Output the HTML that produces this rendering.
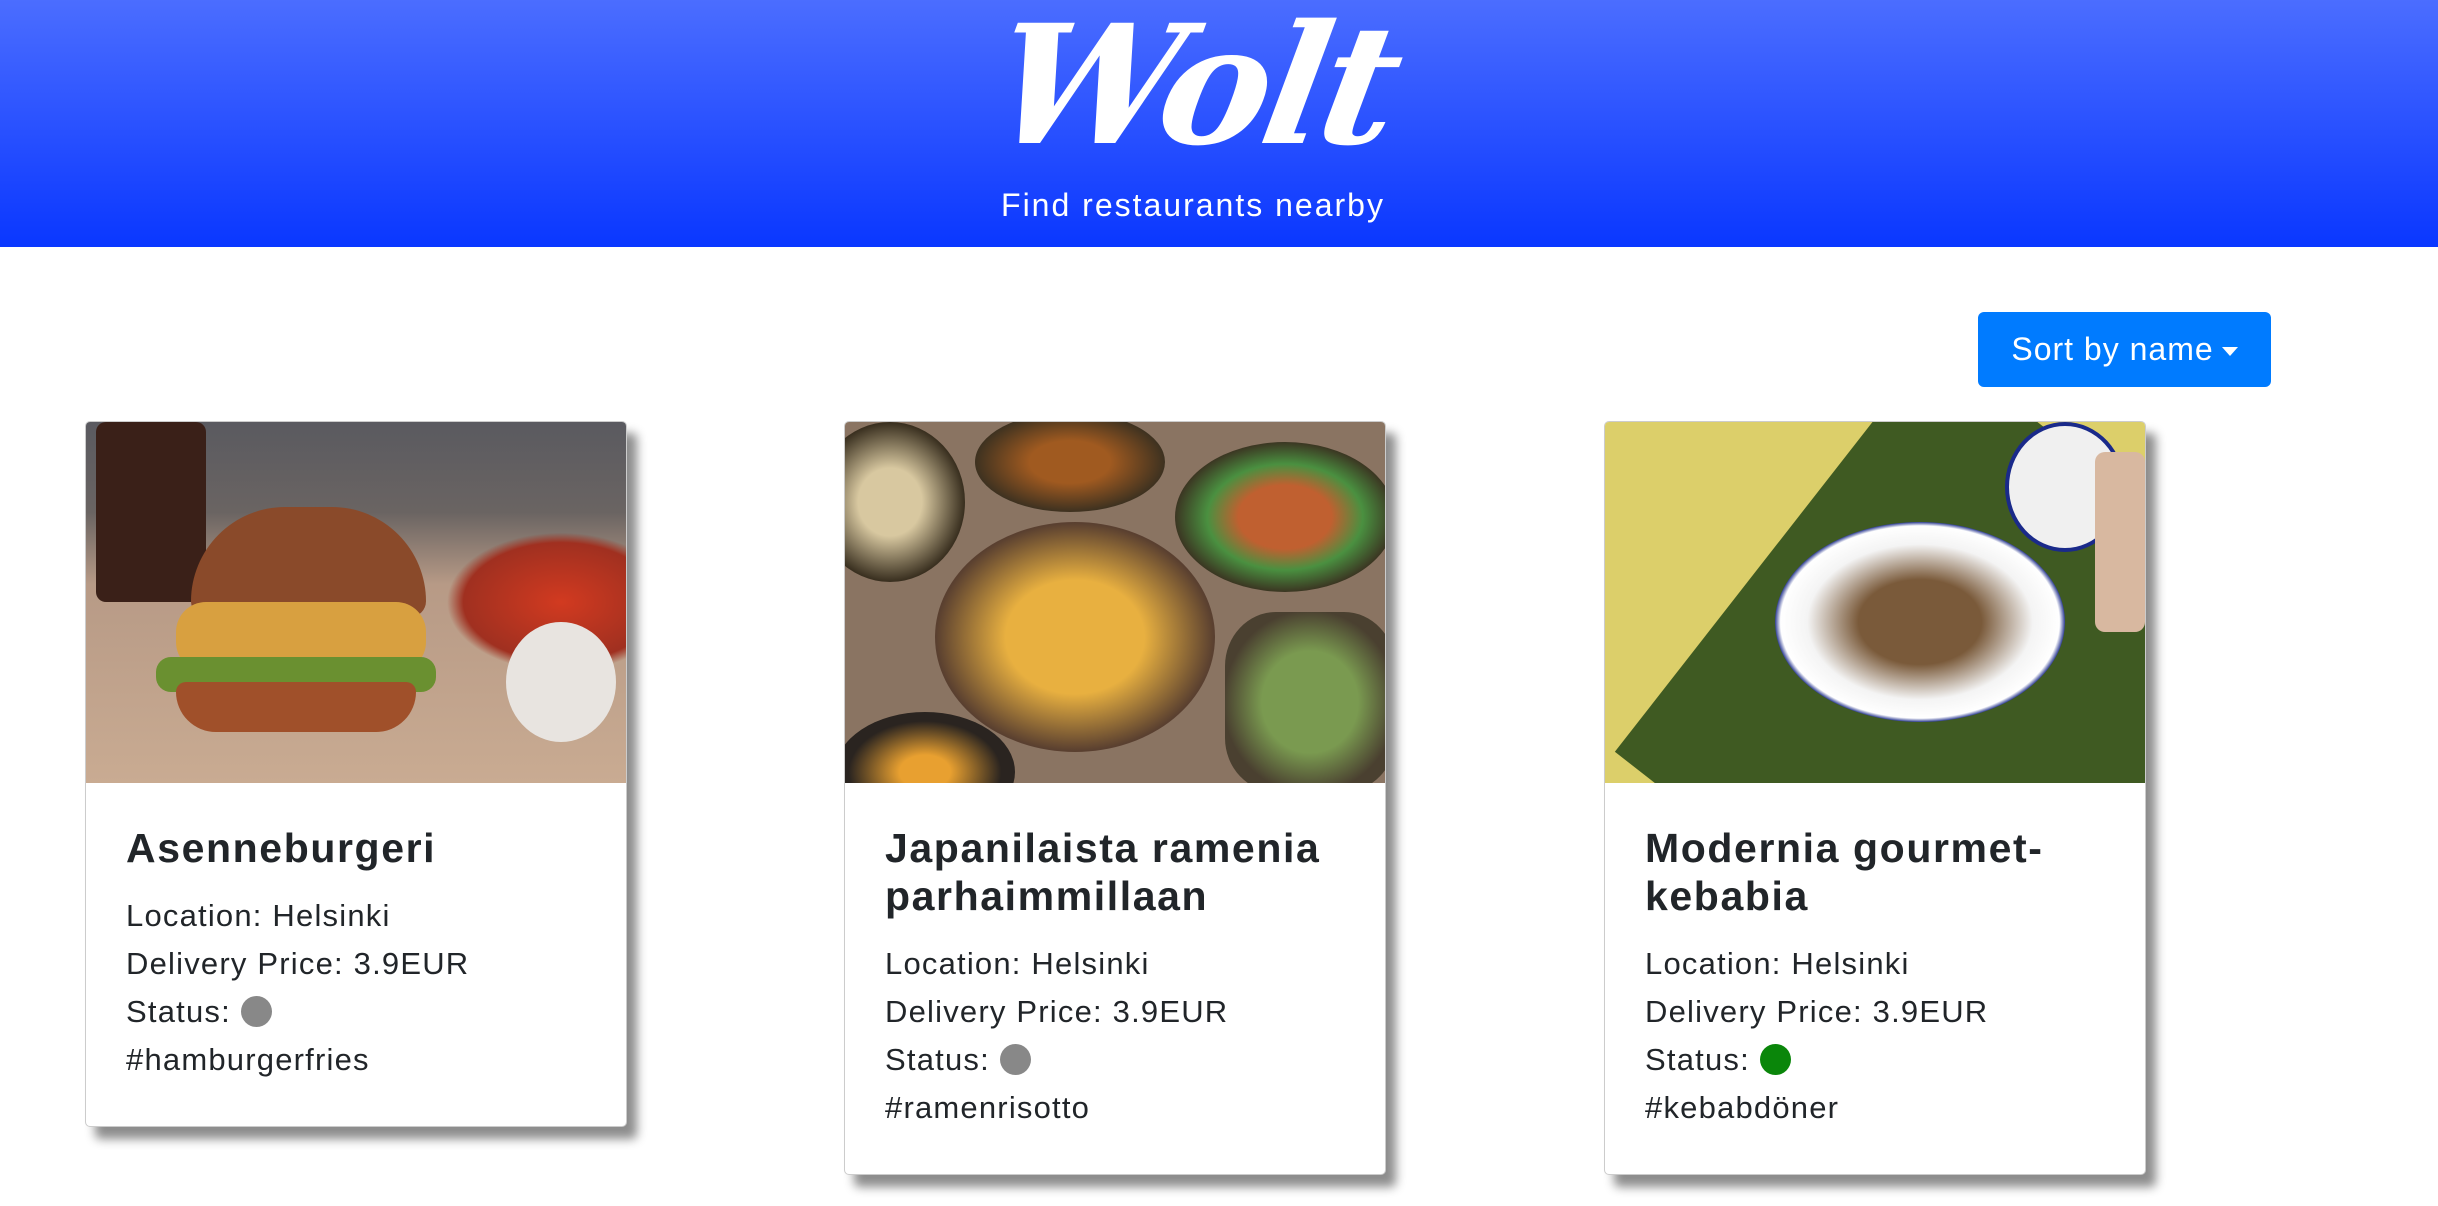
<!DOCTYPE html>
<html><head><meta charset="utf-8"><style>
*{margin:0;padding:0;box-sizing:border-box}
body{width:2438px;height:1206px;overflow:hidden;background:#fff;font-family:"Liberation Sans",sans-serif;color:#212529;position:relative}
.hdr{position:absolute;left:0;top:0;width:2438px;height:247px;background:linear-gradient(#4b6dff,#0a37ff)}
.logo{position:absolute;left:990px;top:-12px;width:410px;text-align:center;font-family:"DejaVu Serif",serif;font-style:italic;font-weight:bold;font-size:165px;color:#fff;letter-spacing:-6px;transform:skewX(-10deg)}
.sub{position:absolute;left:0;width:2386px;top:187px;text-align:center;color:#fff;font-size:32px;letter-spacing:2px}
.btn{position:absolute;left:1978px;top:312px;width:293px;height:75px;background:#007bff;border-radius:6px;color:#fff;font-size:32px;line-height:75px;text-align:center;letter-spacing:1px}
.btn i{display:inline-block;width:0;height:0;border-left:8px solid transparent;border-right:8px solid transparent;border-top:9px solid #fff;vertical-align:middle;margin-left:8px}
.card{position:absolute;top:421px;width:542px;background:#fff;border:1px solid #ccc;border-radius:5px;box-shadow:10px 12px 10px rgba(0,0,0,.45);overflow:hidden}
.img{height:361px;position:relative;overflow:hidden}
.body{padding:41px 30px 0 40px}
h2{font-size:41px;font-weight:bold;line-height:48px;margin-bottom:20px;letter-spacing:1.6px}
p{font-size:31px;line-height:48px;letter-spacing:1.2px}
.dot{display:inline-block;width:31px;height:31px;border-radius:50%;vertical-align:-5px}
</style></head><body>
<div class="hdr"><div class="logo">Wolt</div><div class="sub">Find restaurants nearby</div></div>
<div class="btn">Sort by name<i></i></div>

<div class="card" style="left:85px;height:706px">
 <div class="img" style="background:linear-gradient(#5a5a60 0%,#6a6462 25%,#b79a86 45%,#c9ab92 100%)">
  <div style="position:absolute;left:10px;top:0;width:110px;height:180px;background:#3a2018;border-radius:10px"></div>
  <div style="position:absolute;left:360px;top:110px;width:230px;height:140px;background:radial-gradient(#d23a20,#a03020 60%,transparent 70%)"></div>
  <div style="position:absolute;left:420px;top:200px;width:110px;height:120px;border-radius:50%;background:#e8e4e0"></div>
  <div style="position:absolute;left:105px;top:85px;width:235px;height:110px;border-radius:120px 120px 20px 20px;background:#8a4a2a"></div>
  <div style="position:absolute;left:90px;top:180px;width:250px;height:70px;border-radius:30px;background:#d8a040"></div>
  <div style="position:absolute;left:70px;top:235px;width:280px;height:35px;border-radius:15px;background:#6a9030"></div>
  <div style="position:absolute;left:90px;top:260px;width:240px;height:50px;border-radius:10px 10px 40px 40px;background:#a0502a"></div>
 </div>
 <div class="body"><h2>Asenneburgeri</h2><p>Location: Helsinki</p><p>Delivery Price: 3.9EUR</p><p>Status: <span class="dot" style="background:#888"></span></p><p>#hamburgerfries</p></div>
</div>

<div class="card" style="left:844px;height:754px">
 <div class="img" style="background:#8a7462">
  <div style="position:absolute;left:-30px;top:0;width:150px;height:160px;border-radius:50%;background:radial-gradient(#d8c8a0 30%,#3a3020 70%)"></div>
  <div style="position:absolute;left:130px;top:-10px;width:190px;height:100px;border-radius:50%;background:radial-gradient(#a05a20 30%,#3a3020 72%)"></div>
  <div style="position:absolute;left:330px;top:20px;width:220px;height:150px;border-radius:50%;background:radial-gradient(#c06030 30%,#4a9040 50%,#3a3020 72%)"></div>
  <div style="position:absolute;left:90px;top:100px;width:280px;height:230px;border-radius:50%;background:radial-gradient(#e8b040 35%,#5a4030 70%)"></div>
  <div style="position:absolute;left:380px;top:190px;width:170px;height:180px;border-radius:30%;background:radial-gradient(#7a9a50 40%,#4a4030 72%)"></div>
  <div style="position:absolute;left:-10px;top:290px;width:180px;height:120px;border-radius:50%;background:radial-gradient(#e8a030 20%,#2a2420 60%)"></div>
 </div>
 <div class="body"><h2>Japanilaista ramenia parhaimmillaan</h2><p>Location: Helsinki</p><p>Delivery Price: 3.9EUR</p><p>Status: <span class="dot" style="background:#888"></span></p><p>#ramenrisotto</p></div>
</div>

<div class="card" style="left:1604px;height:754px">
 <div class="img" style="background:#dccf6a">
  <div style="position:absolute;top:-80px;width:560px;height:520px;background:#3f5a22;transform:rotate(38deg);transform-origin:0 0;left:330px"></div>
  <div style="position:absolute;left:170px;top:100px;width:290px;height:200px;border-radius:50%;background:radial-gradient(#7a5a3a 30%,#f4f4f4 55%,#fff 68%,#1a2a8a 71%,transparent 72%)"></div>
  <div style="position:absolute;left:400px;top:0;width:120px;height:130px;border-radius:50%;background:#f0f0f0;border:4px solid #1a2a8a"></div>
  <div style="position:absolute;left:490px;top:30px;width:50px;height:180px;border-radius:10px;background:#d8b8a0"></div>
 </div>
 <div class="body"><h2>Modernia gourmet-kebabia</h2><p>Location: Helsinki</p><p>Delivery Price: 3.9EUR</p><p>Status: <span class="dot" style="background:#0a860a"></span></p><p>#kebabdöner</p></div>
</div>
</body></html>
